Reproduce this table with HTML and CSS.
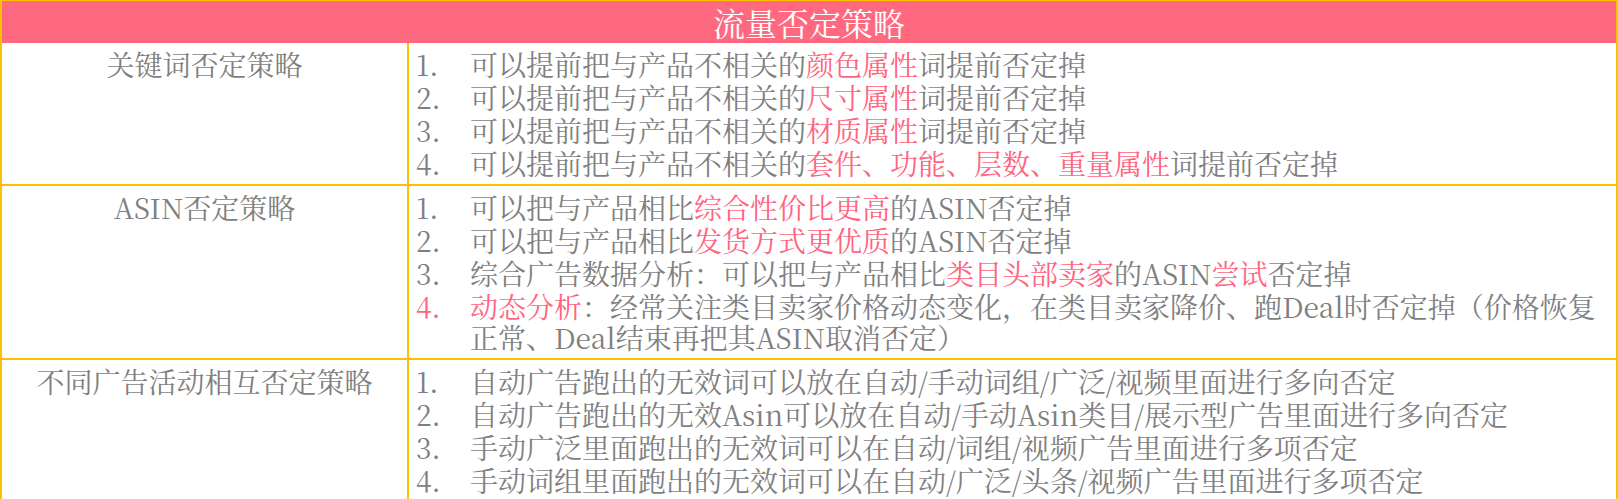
FILE: index.html
```html
<!DOCTYPE html>
<html lang="zh-CN">
<head>
<meta charset="utf-8">
<title>流量否定策略</title>
<link rel="stylesheet" href="styles.css">
</head>
<body>
<div class="sheet">
  <div class="title">流量否定策略</div>

  <div class="row">
    <div class="label">关键词否定策略</div>
    <ol class="items">
      <li><span class="num">1.</span><span class="txt">可以提前把与产品不相关的<span class="hl">颜色属性</span>词提前否定掉</span></li>
      <li><span class="num">2.</span><span class="txt">可以提前把与产品不相关的<span class="hl">尺寸属性</span>词提前否定掉</span></li>
      <li><span class="num">3.</span><span class="txt">可以提前把与产品不相关的<span class="hl">材质属性</span>词提前否定掉</span></li>
      <li><span class="num">4.</span><span class="txt">可以提前把与产品不相关的<span class="hl">套件、功能、层数、重量属性</span>词提前否定掉</span></li>
    </ol>
  </div>

  <div class="row">
    <div class="label">ASIN否定策略</div>
    <ol class="items">
      <li><span class="num">1.</span><span class="txt">可以把与产品相比<span class="hl">综合性价比更高</span>的ASIN否定掉</span></li>
      <li><span class="num">2.</span><span class="txt">可以把与产品相比<span class="hl">发货方式更优质</span>的ASIN否定掉</span></li>
      <li><span class="num">3.</span><span class="txt">综合广告数据分析：可以把与产品相比<span class="hl">类目头部卖家</span>的ASIN<span class="hl">尝试</span>否定掉</span></li>
      <li><span class="num hl">4.</span><span class="txt"><span class="hl">动态分析</span>：经常关注类目卖家价格动态变化，在类目卖家降价、跑Deal时否定掉（价格恢复正常、Deal结束再把其ASIN取消否定）</span></li>
    </ol>
  </div>

  <div class="row">
    <div class="label">不同广告活动相互否定策略</div>
    <ol class="items">
      <li><span class="num">1.</span><span class="txt">自动广告跑出的无效词可以放在自动/手动词组/广泛/视频里面进行多向否定</span></li>
      <li><span class="num">2.</span><span class="txt">自动广告跑出的无效Asin可以放在自动/手动Asin类目/展示型广告里面进行多向否定</span></li>
      <li><span class="num">3.</span><span class="txt">手动广泛里面跑出的无效词可以在自动/词组/视频广告里面进行多项否定</span></li>
      <li><span class="num">4.</span><span class="txt">手动词组里面跑出的无效词可以在自动/广泛/头条/视频广告里面进行多项否定</span></li>
    </ol>
  </div>
</div>
</body>
</html>
```

FILE: styles.css
```css
html, body {
  margin: 0;
  padding: 0;
  background: #ffffff;
}

body {
  font-family: "Noto Serif CJK SC", "Noto Sans CJK SC", "Noto Sans", sans-serif;
  color: #7f7f7f;
}

.sheet {
  width: 1618px;
  box-sizing: border-box;
  border-top: 1px solid #ffc000;
  border-left: 2px solid #ffc000;
  border-right: 2px solid #ffc000;
}

.title {
  height: 42px;
  line-height: 42px;
  background: #ff6980;
  color: #ffffff;
  text-align: center;
  font-size: 32px;
}

.row {
  display: grid;
  grid-template-columns: 407px 1fr;
  border-top: 2px solid #ffc000;
}

.title + .row {
  border-top: none;
}

.label {
  border-right: 2px solid #ffc000;
  text-align: center;
  font-size: 28px;
  line-height: 31px;
  padding: 6px 0 5px;
}

.items {
  list-style: none;
  margin: 0;
  padding: 6px 15px 5px 7px;
  display: flex;
  flex-direction: column;
  gap: 2px;
  font-size: 28px;
  line-height: 31px;
}

.items li {
  display: grid;
  grid-template-columns: 54px 1fr;
}

.hl {
  color: #ff6480;
}
```
